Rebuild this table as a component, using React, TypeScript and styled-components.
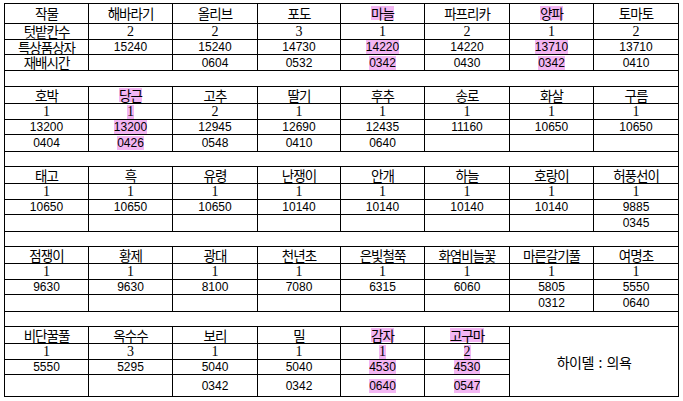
import * as React from "react"
import styled, { createGlobalStyle, css } from "styled-components"

const GlobalStyle = createGlobalStyle`
  html, body {
    margin: 0;
    padding: 0;
    background: #ffffff;
  }
`

type Kind = "label" | "digit" | "number"

type Value = { text: string; mark?: boolean }

type Block = {
  head: Value[]
  plots: Value[]
  boxes: Value[]
  times: Value[]
}

const v = (text: string, mark = false): Value => ({ text, mark })

const blocks: Block[] = [
  {
    head: [v("작물"), v("해바라기"), v("올리브"), v("포도"), v("마늘", true), v("파프리카"), v("양파", true), v("토마토")],
    plots: [v("텃밭칸수"), v("2"), v("2"), v("3"), v("1"), v("2"), v("1"), v("2")],
    boxes: [v("특상품상자"), v("15240"), v("15240"), v("14730"), v("14220", true), v("14220"), v("13710", true), v("13710")],
    times: [v("재배시간"), v(""), v("0604"), v("0532"), v("0342", true), v("0430"), v("0342", true), v("0410")],
  },
  {
    head: [v("호박"), v("당근", true), v("고추"), v("딸기"), v("후추"), v("송로"), v("화살"), v("구름")],
    plots: [v("1"), v("1", true), v("2"), v("1"), v("1"), v("1"), v("1"), v("1")],
    boxes: [v("13200"), v("13200", true), v("12945"), v("12690"), v("12435"), v("11160"), v("10650"), v("10650")],
    times: [v("0404"), v("0426", true), v("0548"), v("0410"), v("0640"), v(""), v(""), v("")],
  },
  {
    head: [v("태고"), v("흑"), v("유령"), v("난쟁이"), v("안개"), v("하늘"), v("호랑이"), v("허풍선이")],
    plots: [v("1"), v("1"), v("1"), v("1"), v("1"), v("1"), v("1"), v("1")],
    boxes: [v("10650"), v("10650"), v("10650"), v("10140"), v("10140"), v("10140"), v("10140"), v("9885")],
    times: [v(""), v(""), v(""), v(""), v(""), v(""), v(""), v("0345")],
  },
  {
    head: [v("점쟁이"), v("황제"), v("광대"), v("천년초"), v("은빛철쭉"), v("화염비늘꽃"), v("마른갈기풀"), v("여명초")],
    plots: [v("1"), v("1"), v("1"), v("1"), v("1"), v("1"), v("1"), v("1")],
    boxes: [v("9630"), v("9630"), v("8100"), v("7080"), v("6315"), v("6060"), v("5805"), v("5550")],
    times: [v(""), v(""), v(""), v(""), v(""), v(""), v("0312"), v("0640")],
  },
  {
    head: [v("비단꿀풀"), v("옥수수"), v("보리"), v("밀"), v("감자", true), v("고구마", true)],
    plots: [v("1"), v("3"), v("1"), v("1"), v("1", true), v("2", true)],
    boxes: [v("5550"), v("5295"), v("5040"), v("5040"), v("4530", true), v("4530", true)],
    times: [v(""), v(""), v("0342"), v("0342"), v("0640", true), v("0547", true)],
  },
]

// row heights, border included, measured from the sheet
const rowHeights = [
  20, 16, 15, 16, 16,
  17, 16, 15, 17, 15,
  17, 16, 15, 17, 15,
  17, 16, 15, 17, 15,
  17, 16, 15, 22,
]

const colWidths = [84, 84, 85, 83, 84, 85, 84, 85]

const Page = styled.div`
  padding: 3px 0 0 4px;
`

const Sheet = styled.div`
  display: grid;
  grid-template-columns: ${colWidths.map((w) => `${w}px`).join(" ")};
  grid-template-rows: ${rowHeights.map((h) => `${h}px`).join(" ")};
  width: max-content;
  border-top: 1px solid #000;
  border-left: 1px solid #000;
`

const Cell = styled.div<{ $kind: Kind }>`
  box-sizing: border-box;
  display: flex;
  align-items: center;
  justify-content: center;
  border-right: 1px solid #000;
  border-bottom: 1px solid #000;
  color: #000;
  white-space: nowrap;
  line-height: 14px;
  ${({ $kind }) =>
    $kind === "label"
      ? css`
          font-family: "Noto Sans CJK KR", "Noto Sans", sans-serif;
          font-size: 13.5px;
          letter-spacing: -1px;
          padding-bottom: 1px;
        `
      : $kind === "digit"
      ? css`
          font-family: "Liberation Serif", "DejaVu Serif", serif;
          font-size: 14px;
        `
      : css`
          font-family: "Liberation Sans", Arial, sans-serif;
          font-size: 12px;
        `}
`

const Spacer = styled.div`
  grid-column: 1 / -1;
  border-right: 1px solid #000;
  border-bottom: 1px solid #000;
`

const Note = styled.div`
  grid-column: 7 / span 2;
  grid-row: span 4;
  display: flex;
  align-items: center;
  justify-content: center;
  border-right: 1px solid #000;
  border-bottom: 1px solid #000;
  font-family: "Noto Sans CJK KR", "Noto Sans", sans-serif;
  font-size: 14px;
  line-height: 16px;
  letter-spacing: -0.5px;
  color: #000;
  word-spacing: 2px;
`

const Mark = styled.span<{ $on?: boolean }>`
  line-height: 14px;
  background: ${({ $on }) => ($on ? "#f3b6f3" : "transparent")};
`

const Row = ({ values, kind }: { values: Value[]; kind: Kind[] }) => (
  <>
    {values.map((val, i) => (
      <Cell key={i} $kind={kind[i]}>
        {val.text && <Mark $on={val.mark}>{val.text}</Mark>}
      </Cell>
    ))}
  </>
)

const App = () => {
  return (
    <Page>
      <GlobalStyle />
      <Sheet>
        {blocks.map((b, bi) => {
          const first = bi === 0
          const cols = b.head.length
          const label = Array<Kind>(cols).fill("label")
          const digit = Array<Kind>(cols).fill("digit")
          const number = Array<Kind>(cols).fill("number")
          if (first) {
            digit[0] = "label"
            number[0] = "label"
          }
          return (
            <React.Fragment key={bi}>
              <Row values={b.head} kind={label} />
              {bi === blocks.length - 1 && <Note>하이델 : 의욕</Note>}
              <Row values={b.plots} kind={digit} />
              <Row values={b.boxes} kind={number} />
              <Row values={b.times} kind={number} />
              {bi < blocks.length - 1 && <Spacer />}
            </React.Fragment>
          )
        })}
      </Sheet>
    </Page>
  )
}

export default App
